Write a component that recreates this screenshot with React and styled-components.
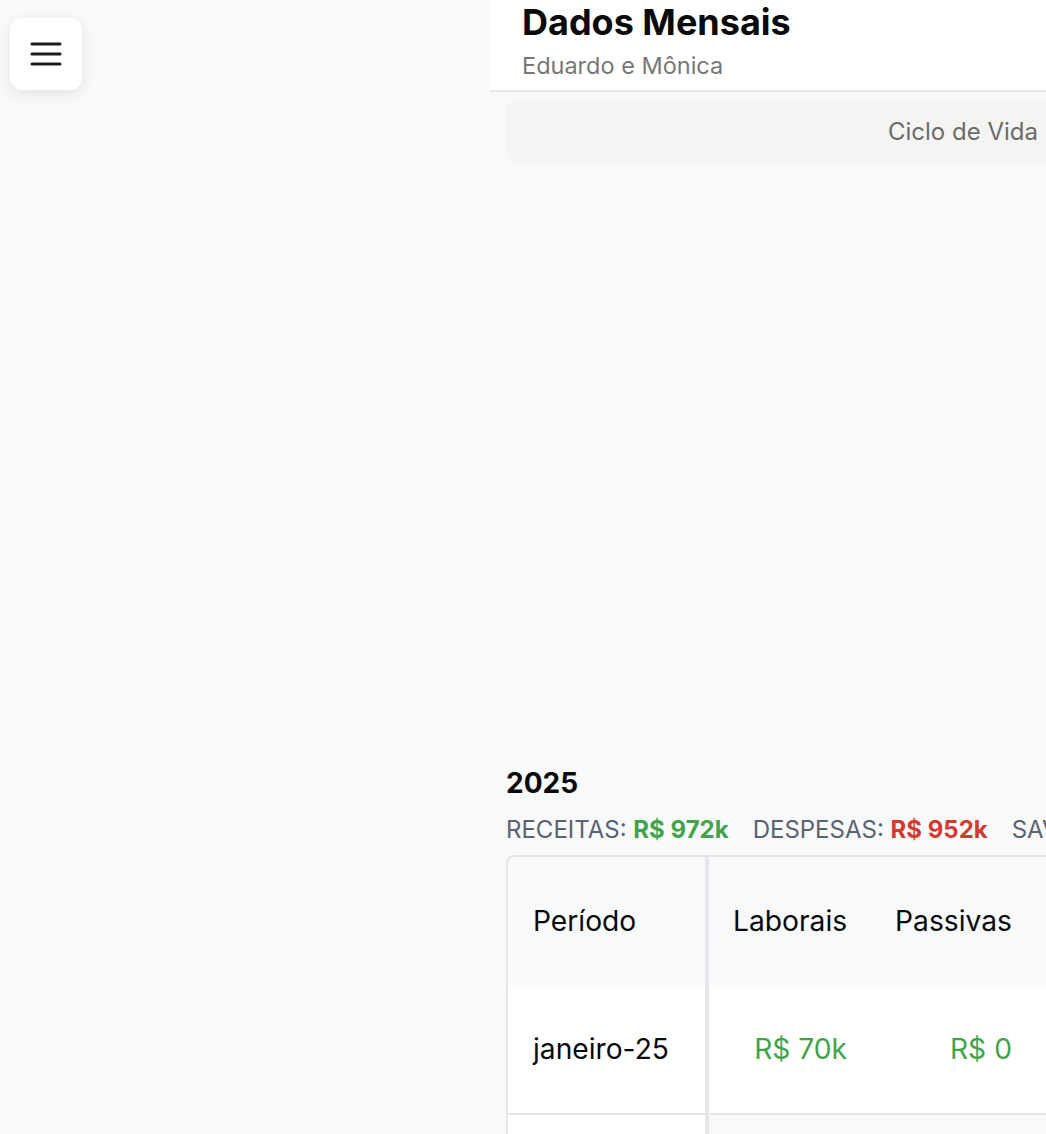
import styled, { createGlobalStyle } from "styled-components";

const GlobalStyle = createGlobalStyle`
  html, body {
    margin: 0;
    padding: 0;
    background: #f8f9fb;
    font-family: Inter, "Noto Sans", sans-serif;
    color: #111;
  }
  * {
    box-sizing: border-box;
  }
`;

const months = [
  { period: "janeiro-25", laborais: "R$ 70k", passivas: "R$ 0", outras: "R$ 1k" },
  { period: "fevereiro-25", laborais: "R$ 70k", passivas: "R$ 0", outras: "R$ 1k" },
  { period: "março-25", laborais: "R$ 70k", passivas: "R$ 0", outras: "R$ 1k" },
];

const Page = styled.div`
  display: flex;
  min-height: 100vh;
  width: 100%;
  overflow: hidden;
`;

const Sidebar = styled.aside`
  flex: 0 0 490px;
  padding: 18px 0 0 10px;
`;

const MenuButton = styled.button`
  width: 72px;
  height: 72px;
  border: none;
  border-radius: 12px;
  background: #ffffff;
  box-shadow: 0 4px 14px rgba(0, 0, 0, 0.09);
  display: flex;
  align-items: center;
  justify-content: center;
  cursor: pointer;
  padding: 0;
`;

const Main = styled.main`
  flex: 1;
  min-width: 0;
  overflow: hidden;
`;

const Header = styled.header`
  background: #ffffff;
  padding: 0 32px;
  height: 92px;
  border-bottom: 2px solid #e8e6e3;
  display: flex;
  flex-direction: column;
`;

const Title = styled.h1`
  margin: 0;
  font-size: 36px;
  font-weight: 700;
  line-height: 44px;
  color: #0a0a0a;
  white-space: nowrap;
`;

const Subtitle = styled.div`
  margin-top: 6px;
  font-size: 23.5px;
  line-height: 32px;
  color: #777777;
  white-space: nowrap;
`;

const Content = styled.div`
  padding: 8px 0 0 16px;
`;

const TabBar = styled.div`
  width: 1000px;
  height: 63px;
  background: #f4f4f2;
  border-radius: 12px;
  display: flex;
  align-items: center;
  padding-left: 382px;
`;

const Tab = styled.span`
  font-size: 24px;
  color: #6b6b6b;
  white-space: nowrap;
`;

const ChartArea = styled.div`
  height: 603px;
`;

const YearTitle = styled.h2`
  margin: 0;
  font-size: 28px;
  font-weight: 700;
  line-height: 34px;
  color: #0a0a0a;
`;

const Summary = styled.div`
  display: flex;
  gap: 24px;
  margin-top: 16px;
  font-size: 24px;
  line-height: 28px;
  white-space: nowrap;
`;

const SummaryItem = styled.span`
  color: #5b6270;
`;

const SummaryValue = styled.b`
  font-weight: 700;
  color: ${(p) => (p.$tone === "red" ? "#d43a2f" : "#43a34a")};
`;

const Table = styled.table`
  margin-top: 11px;
  border-collapse: separate;
  border-spacing: 0;
  border-top: 2px solid #e6e6e6;
  border-left: 2px solid #e6e6e6;
  border-top-left-radius: 8px;
  font-size: 28.2px;
  white-space: nowrap;
`;

const HeadCell = styled.th`
  height: 128px;
  background: #f8f9fb;
  font-weight: 400;
  text-align: left;
  color: #0a0a0a;
  padding: 0 24px;
  ${(p) =>
    p.$sticky &&
    `
    width: 201px;
    padding: 0 8px 0 25px;
    border-right: 4px solid #e5e7eb;
    border-top-left-radius: 8px;
  `}
`;

const Cell = styled.td`
  height: 130px;
  padding: 0 24px;
  text-align: right;
  color: #43a34a;
  background: ${(p) => (p.$odd ? "#f8f9fb" : "#ffffff")};
  border-bottom: 2px solid #e5e5e5;
`;

const PeriodCell = styled.td`
  height: 130px;
  width: 201px;
  padding: 0 8px 0 25px;
  background: #ffffff;
  color: #0a0a0a;
  border-right: 4px solid #e5e7eb;
  border-bottom: 2px solid #e5e5e5;
`;

function MenuIcon() {
  return (
    <svg width="34" height="26" viewBox="0 0 34 26" fill="none">
      <path
        d="M3 3h28M3 13h28M3 23h28"
        stroke="#1c1c1c"
        strokeWidth="3"
        strokeLinecap="round"
      />
    </svg>
  );
}

export default function App() {
  return (
    <>
      <GlobalStyle />
      <Page>
        <Sidebar>
          <MenuButton aria-label="Menu">
            <MenuIcon />
          </MenuButton>
        </Sidebar>
        <Main>
          <Header>
            <Title>Dados Mensais</Title>
            <Subtitle>Eduardo e Mônica</Subtitle>
          </Header>
          <Content>
            <TabBar>
              <Tab>Ciclo de Vida</Tab>
            </TabBar>
            <ChartArea />
            <YearTitle>2025</YearTitle>
            <Summary>
              <SummaryItem>
                RECEITAS: <SummaryValue>R$ 972k</SummaryValue>
              </SummaryItem>
              <SummaryItem>
                DESPESAS: <SummaryValue $tone="red">R$ 952k</SummaryValue>
              </SummaryItem>
              <SummaryItem>
                SAVINGS: <SummaryValue>R$ 20k</SummaryValue>
              </SummaryItem>
            </Summary>
            <Table>
              <thead>
                <tr>
                  <HeadCell $sticky>Período</HeadCell>
                  <HeadCell>Laborais</HeadCell>
                  <HeadCell>Passivas</HeadCell>
                  <HeadCell>Outras</HeadCell>
                </tr>
              </thead>
              <tbody>
                {months.map((m, i) => (
                  <tr key={m.period}>
                    <PeriodCell>{m.period}</PeriodCell>
                    <Cell $odd={i % 2 === 1}>{m.laborais}</Cell>
                    <Cell $odd={i % 2 === 1}>{m.passivas}</Cell>
                    <Cell $odd={i % 2 === 1}>{m.outras}</Cell>
                  </tr>
                ))}
              </tbody>
            </Table>
          </Content>
        </Main>
      </Page>
    </>
  );
}
